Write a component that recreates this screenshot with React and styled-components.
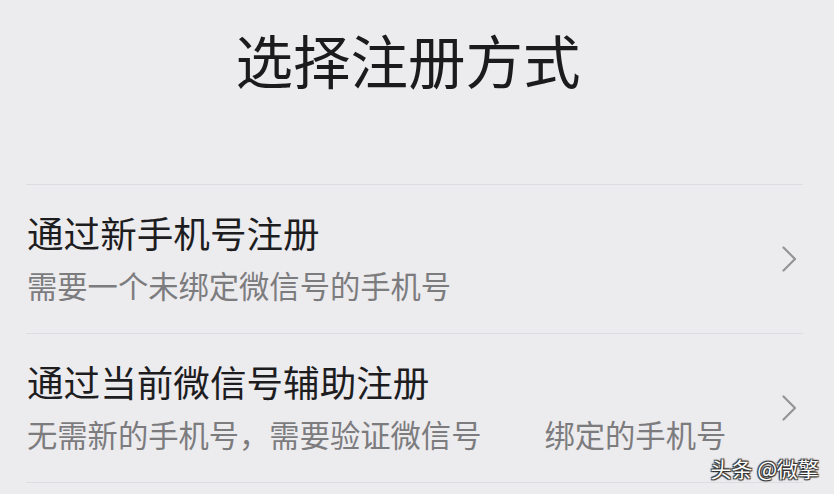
import React from "react";
import styled, { createGlobalStyle } from "styled-components";

const GlobalStyle = createGlobalStyle`
  html, body {
    margin: 0;
    padding: 0;
    background: #ecebee;
  }
  body {
    font-family: "Noto Sans CJK SC", "Noto Sans", sans-serif;
  }
`;

const options = [
  {
    title: "通过新手机号注册",
    desc: ["需要一个未绑定微信号的手机号"],
  },
  {
    title: "通过当前微信号辅助注册",
    desc: ["无需新的手机号，需要验证微信号", "绑定的手机号"],
  },
];

const Page = styled.div`
  position: relative;
  width: 834px;
  height: 494px;
  overflow: hidden;
  background: #ecebee;
`;

const Header = styled.header`
  height: 184px;
  display: flex;
  justify-content: center;
  padding: 31px 18px 0 0;
  box-sizing: border-box;
`;

const Title = styled.h1`
  margin: 0;
  font-size: 57.5px;
  font-weight: 400;
  line-height: 1;
  color: #1b1b1d;
`;

const List = styled.ul`
  list-style: none;
  margin: 0 31px 0 26px;
  padding: 0;
`;

const Row = styled.li`
  height: 148px;
  border-top: 1px solid #dddce0;
  display: flex;
  align-items: center;
  justify-content: space-between;
  padding: 0 6px 0 1px;
  &:last-child {
    border-bottom: 1px solid #dddce0;
  }
`;

const Texts = styled.div`
  display: flex;
  flex-direction: column;
  gap: 19px;
  margin-top: -3px;
`;

const RowTitle = styled.div`
  font-size: 36.6px;
  line-height: 1;
  color: #1d1d1f;
`;

const RowDesc = styled.div`
  font-size: 30.3px;
  line-height: 1;
  color: #7c7c7e;
  white-space: nowrap;
`;

const Part = styled.span`
  & + & {
    margin-left: 63px;
  }
`;

const Chevron = () => (
  <svg width="16" height="28" viewBox="0 0 16 28" fill="none">
    <path
      d="M2.5 2.5 L14 14 L2.5 25.5"
      stroke="#949496"
      strokeWidth="2.2"
      strokeLinecap="round"
      strokeLinejoin="round"
    />
  </svg>
);

const Watermark = styled.div`
  position: absolute;
  right: 15px;
  bottom: 15px;
  font-size: 21px;
  line-height: 1;
  color: #ffffff;
  text-shadow: 0 0 1px #222, 1px 1px 1px #333, -1px -1px 1px #333,
    1px -1px 1px #333, -1px 1px 1px #333;
`;

export default function App() {
  return (
    <Page>
      <GlobalStyle />
      <Header>
        <Title>选择注册方式</Title>
      </Header>
      <List>
        {options.map((opt) => (
          <Row key={opt.title}>
            <Texts>
              <RowTitle>{opt.title}</RowTitle>
              <RowDesc>
                {opt.desc.map((d) => (
                  <Part key={d}>{d}</Part>
                ))}
              </RowDesc>
            </Texts>
            <Chevron />
          </Row>
        ))}
      </List>
      <Watermark>头条 @微擎</Watermark>
    </Page>
  );
}
